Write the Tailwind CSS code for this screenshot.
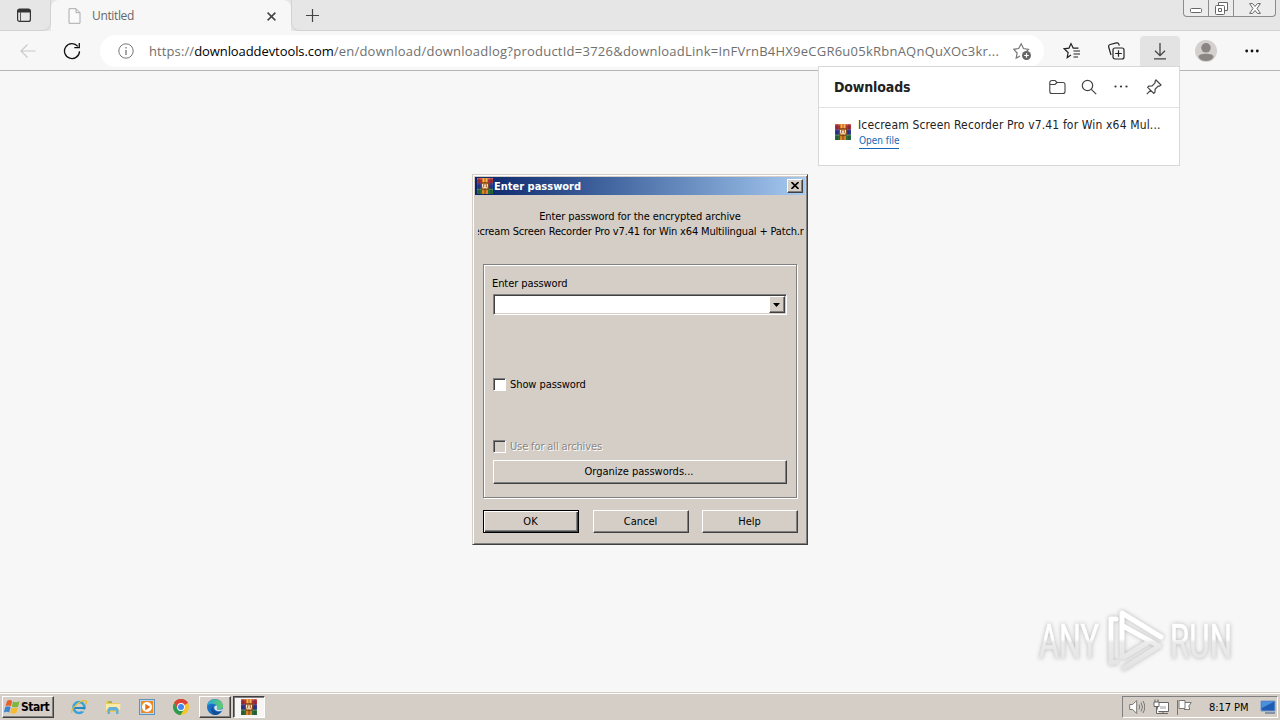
<!DOCTYPE html>
<html lang="en">
<head>
<meta charset="utf-8">
<title>Untitled</title>
<script src="https://cdn.jsdelivr.net/npm/@tailwindcss/browser@4"></script>
</head>
<body class="relative flex h-[720px] w-[1280px] flex-col overflow-hidden bg-[#f7f7f7] font-['DejaVu_Sans_Condensed','DejaVu_Sans',sans-serif] text-[11px] text-black">
<svg class="hidden">
  <symbol id="rar" viewBox="0 0 16 16">
    <rect x="0" y="0" width="16" height="5.400" fill="#a8303a"/><rect x="0" y="0" width="16" height="1.300" fill="#dc6a62"/>
    <rect x="0" y="5.400" width="16" height="5.400" fill="#2b3a94"/><rect x="0" y="5.400" width="16" height="1" fill="#7a4b9a"/>
    <rect x="0" y="10.800" width="16" height="5.200" fill="#2b6c38"/><rect x="0" y="10.800" width="16" height="1" fill="#4da25c"/>
    <path d="M2 0v16M14 0v16" stroke="#1c1c2c" stroke-opacity=".4"/>
    <rect x="5" y="0" width="6" height="16" fill="#d9852c"/><path d="M6.500 0v5M9.500 0v5" stroke="#f2b45a"/><path d="M8 11v5" stroke="#774012"/>
    <rect x="4.200" y="4.600" width="7.600" height="7" rx="1" fill="#b0682a" stroke="#5c300c" stroke-width=".6"/>
    <path d="M5.600 6v2.500q0 1.500 1.200 1.500T8 8.500V6.500v2q0 1.500 1.200 1.500t1.200-1.500V6" fill="none" stroke="#fff3dc" stroke-width="1"/>
  </symbol>
</svg>

<!-- Tab strip -->
<header class="flex h-[31px] shrink-0 bg-[#e6e6e6]">
  <div class="flex w-[51px] items-center justify-center rounded-br-lg border-r border-b border-[#d2d2d2]">
    <svg class="mr-[2px] h-4 w-4" viewBox="0 0 16 16" fill="none"><rect x="1.600" y="2" width="12.800" height="12.400" rx="2" stroke="#333" stroke-width="1.200"/><path d="M1.600 5.600V4a2 2 0 0 1 2-2h8.800a2 2 0 0 1 2 2v1.600z" fill="#333"/><path d="M4.500 5v9" stroke="#555"/></svg>
  </div>
  <div class="flex w-[240px] items-center rounded-t-lg bg-[#f7f7f7] pl-[17px] pr-[15px]">
    <svg class="h-4 w-[13px]" viewBox="0 0 13 16" fill="#fafafa" stroke="#aaa"><path d="M1 .7h7l4 4v10.600H1zM8 .7v4h4"/></svg>
    <span class="ml-[11px] flex-1 font-['Open_Sans',sans-serif] text-[12px] tracking-[-0.35px] text-[#666]">Untitled</span>
    <svg class="mt-[2px] h-[9px] w-[9px]" viewBox="0 0 9 9" stroke="#444" stroke-width="1.500"><path d="M.6.6l7.800 7.800M8.400.6L.6 8.400"/></svg>
  </div>
  <div class="flex flex-1 items-center rounded-bl-lg border-b border-l border-[#d2d2d2] pl-[13px]">
    <svg class="h-[15px] w-[15px]" viewBox="0 0 15 15" stroke="#444" stroke-width="1.200"><path d="M7.500 1v13M1 7.500h13"/></svg>
    <div class="mr-1 ml-auto flex h-[17px] w-[93px] self-start rounded-b border border-t-0 border-[#8c8c8c] bg-[#ececec]">
      <div class="flex w-[25px] items-end justify-center border-r border-[#8c8c8c] pb-[3px]"><svg class="h-[5px] w-3" viewBox="0 0 12 5"><rect x=".5" y=".5" width="11" height="4" rx="1" fill="#fff" stroke="#666"/></svg></div>
      <div class="flex w-[25px] items-center justify-center border-r border-[#8c8c8c]"><svg class="h-[13px] w-[13px]" viewBox="0 0 13 13" fill="#fff" stroke="#666"><path d="M3.500.5h9v8h-9z"/><rect x=".5" y="3.500" width="9" height="9" rx="1"/><path d="M3.500 6.500h3v3h-3z"/></svg></div>
      <div class="flex flex-1 items-center justify-center"><svg class="h-[11px] w-3" viewBox="0 0 12 11" fill="#fff" stroke="#666"><path d="M.6.6h3L6 3.500 8.400.6h3L8 5.500l3.400 4.900h-3L6 7.500l-2.400 2.900h-3L4 5.500z"/></svg></div>
    </div>
  </div>
</header>

<!-- Toolbar -->
<nav class="flex h-10 shrink-0 items-center border-b border-[#b5b5b5] bg-[#f7f7f7]">
  <svg class="ml-5 h-4 w-4" viewBox="0 0 16 16" fill="none" stroke="#c9c9c9" stroke-width="1.200"><path d="M15.500 8H1M7.500 1.500L1 8l6.500 6.500"/></svg>
  <svg class="ml-[27px] h-[18px] w-[18px]" viewBox="0 0 18 18" fill="none" stroke="#111" stroke-width="1.300"><path d="M16.500 9.200A7.500 7.500 0 1 1 14.800 4.300M16.300 1v4.600h-5"/></svg>
  <div class="ml-[19px] flex h-8 w-[944px] items-center rounded-full bg-white pl-[18px] pr-[13px]">
    <svg class="h-4 w-4 shrink-0" viewBox="0 0 16 16" fill="none" stroke="#777"><circle cx="8" cy="8" r="7.200"/><path d="M8 7v5M8 4v1.500" stroke-width="1.300"/></svg>
    <p class="mt-[2px] ml-[15px] w-[860px] font-['Open_Sans',sans-serif] text-[13px] whitespace-nowrap text-[#6f6f6f]"><span class="tracking-[0.1px]">https://</span><span class="tracking-[-0.080px] text-black">downloaddevtools.com</span><span class="tracking-[0.240px]">/en/download/downloadlog?productId=3726&amp;downloadLink=InFVrnB4HX9eCGR6u05kRbnAQnQuXOc3kr...</span></p>
    <svg class="ml-1 h-[18px] w-[18px] shrink-0" viewBox="0 0 18 18" fill="none" stroke="#777" stroke-width="1.200"><path d="M7 14l-3.800 2.200.9-5.200L.8 7.300l4.900-.8L8.200 1.800l2.300 4.700 5 .8-2 2"/><circle cx="13.500" cy="13.500" r="4.500" fill="#666" stroke="none"/><path d="M13.500 11.200v4.600M11.200 13.500h4.600" stroke="#fff"/></svg>
  </div>
  <svg class="ml-[19px] h-[18px] w-[18px]" viewBox="0 0 18 18" fill="none" stroke="#222" stroke-width="1.200"><path d="M8 13l-3.800 2.600.9-5.100L1.200 6.800l4.800-.7L8 1.600l2.200 4.500h5.300M10.500 9h6.500M10.500 12h6.500M10.500 15h4.500" /></svg>
  <svg class="ml-[26px] h-[18px] w-[18px]" viewBox="0 0 18 18" fill="none" stroke="#222" stroke-width="1.200"><path d="M4 13L1.700 5a2 2 0 0 1 1.400-2.500L9.500.9a2 2 0 0 1 2.400 1.400l.4 1.400"/><rect x="6" y="6" width="11" height="11" rx="2"/><path d="M11.500 8.200v6.600M8.200 11.500h6.600"/></svg>
  <div class="ml-[15px] flex h-[34px] w-10 items-start justify-center self-end rounded-t bg-[#e3e3e3] pt-[6px]">
    <svg class="h-[18px] w-4" viewBox="0 0 16 18" fill="none" stroke="#444" stroke-width="1.300"><path d="M8 1v12.500M3 8.700l5 5 5-5M2 16.800h12"/></svg>
  </div>
  <svg class="ml-[15px] h-[22px] w-[22px]" viewBox="0 0 22 22"><circle cx="11" cy="11" r="11" fill="#d4d0cd"/><circle cx="11" cy="7.800" r="4.800" fill="#8b8683"/><path d="M3.500 17c0-2.500 3-3.300 7.500-3.300s7.500.8 7.500 3.300C17 20 14 21 11 21s-6-1-7.500-4z" fill="#8b8683"/></svg>
  <svg class="ml-7 h-[6px] w-[14px]" viewBox="0 0 14 6" fill="#111"><circle cx="1.700" cy="3" r="1.400"/><circle cx="7" cy="3" r="1.400"/><circle cx="12.300" cy="3" r="1.400"/></svg>
</nav>

<main class="flex flex-1 items-end justify-end pr-11 pb-5">
  <!-- Watermark -->
  <svg class="h-[64px] w-[200px] overflow-visible [filter:drop-shadow(0_0_2px_#b5b5b5)]" viewBox="0 0 200 64">
    <defs><linearGradient id="wm" gradientUnits="userSpaceOnUse" x1="0" y1="0" x2="0" y2="64"><stop offset=".48" stop-color="#fff"/><stop offset=".54" stop-color="#ebebeb"/><stop offset="1" stop-color="#e2e2e2"/></linearGradient></defs>
    <g fill="url(#wm)" stroke="url(#wm)" stroke-width=".6" font-family="Roboto" font-size="49">
      <text x="3" y="50" textLength="60" lengthAdjust="spacingAndGlyphs">ANY</text>
      <text x="134" y="50" textLength="62" lengthAdjust="spacingAndGlyphs">RUN</text>
    </g>
    <g fill="none" stroke="url(#wm)" stroke-width="5" stroke-linejoin="round" stroke-linecap="round"><path d="M80 11h-5v44l5-1M86 49V5l39 24M87 18l36 20M88 60l35-22M88 49l26-16"/></g>
  </svg>
</main>

<!-- Taskbar -->
<footer class="flex h-7 shrink-0 items-center border-t border-[#d5cec7] bg-[#d5cec7] pl-[2px] shadow-[inset_0_1px_0_#fff]">
  <div class="mt-px flex h-[22px] w-[52px] items-center border border-t-white border-r-[#404040] border-b-[#404040] border-l-white pl-px shadow-[inset_-1px_-1px_0_#808080]">
    <svg class="h-4 w-4 shrink-0" viewBox="0 0 16 16"><path d="M3 2c2-1.500 3.700-1.200 5.200 0L6.900 7.300C5 6.100 3.500 6.300 1.500 7.200z" fill="#e8602c"/><path d="M9 2.400c2 1.200 4 1 6.500-.2L14.200 7.500c-2.200 1.300-4 1-6.400 0z" fill="#7cb83e"/><path d="M1.200 8.200c2-1.200 3.700-1 5.400 0L5.200 13.500c-1.700-1-3.200-1-5.400 0z" fill="#3f86d2"/><path d="M7.500 8.500c2 1.200 4.200 1 6.400 0l-1.400 5.300c-2.200 1.200-4.200 1-6.400 0z" fill="#f6bc2d"/></svg>
    <span class="ml-px text-[12px] font-bold tracking-[-0.5px]">Start</span>
  </div>
  <svg class="ml-[17px] h-4 w-4" viewBox="0 0 16 16" fill="none"><circle cx="8" cy="8.500" r="5.500" stroke="#35a3df" stroke-width="2.600"/><path d="M3 9h11" stroke="#2386c5" stroke-width="2"/><path d="M1 14C-1 11 9 0 15 2c1 1 0 3-1 4" stroke="#e5bd35" stroke-width="1.300"/><path d="M10.500 10.400H16v2h-5z" fill="#d5cec7"/></svg>
  <svg class="ml-[18px] h-4 w-4" viewBox="0 0 16 16"><path d="M1 2h5l1 2h7v9H1z" fill="#ecc95c"/><path d="M1 5h14.500l-.5 6H1z" fill="#fbeaa5"/><path d="M2.500 15v-5l2-2h7l2 2v5H11v-3.500H5V15z" fill="#62afd8"/><path d="M3 3h4" stroke="#5c9e4b"/></svg>
  <svg class="ml-[18px] h-4 w-4" viewBox="0 0 16 16"><rect x=".5" y=".5" width="15" height="15" fill="#b8d9f0" stroke="#5f91bd"/><rect x="2" y="2" width="12" height="12" fill="#f08a21"/><circle cx="8" cy="8" r="5" fill="#fff"/><path d="M6.300 4.700l5 3.300-5 3.300z" fill="#e46d10"/></svg>
  <svg class="ml-[18px] h-4 w-4" viewBox="0 0 16 16"><circle cx="8" cy="8" r="8" fill="#f5c52c"/><path d="M8 8L1.100 4A8 8 0 0 1 14.900 4z" fill="#db4437"/><path d="M8 4h6.900A8 8 0 0 0 1.100 4L4.500 10z" fill="#db4437"/><path d="M1.100 4a8 8 0 0 0 6.400 12l3.800-6L8 11.700 4.600 10z" fill="#2b9b51"/><circle cx="8" cy="8" r="3.900" fill="#fff"/><circle cx="8" cy="8" r="3" fill="#4285f4"/></svg>
  <div class="mt-px ml-[10px] flex h-[22px] w-8 items-center justify-center border border-t-white border-r-[#404040] border-b-[#404040] border-l-white shadow-[inset_-1px_-1px_0_#808080]">
    <svg class="h-4 w-4" viewBox="0 0 16 16"><defs><linearGradient id="eg" x2="1"><stop stop-color="#2aa6df"/><stop offset="1" stop-color="#63cf62"/></linearGradient></defs><circle cx="8" cy="8" r="8" fill="#1a6fc4"/><path d="M0 7C1-2 15-2 16 7c0 3-3 4-5.500 3.600C9 10 11 9 10 7 8 4 3 4 0 7z" fill="url(#eg)"/><path d="M6 7c-1 4 3 7 8.500 5.300A8 8 0 0 1 7 16C3 13 4 9 6 7z" fill="#124d98"/><path d="M10 7c1 2-1 3 .5 3.600 1.800.5 4 .2 5.500-1l-.8 2C12 13.500 7 11.500 7.200 8.500 7.500 7 9 6 10 7z" fill="#d5e3e8"/></svg>
  </div>
  <div class="mt-px ml-[2px] flex h-[22px] w-8 items-center justify-center border border-t-[#404040] border-r-white border-b-white border-l-[#404040] bg-[#f8f6f4] shadow-[inset_1px_1px_0_#808080]">
    <svg class="h-4 w-4"><use href="#rar"/></svg>
  </div>
  <div class="mt-px mr-[2px] ml-auto flex h-[22px] w-[156px] items-center border border-t-[#808080] border-r-white border-b-white border-l-[#808080] pl-[6px]">
    <svg class="h-4 w-4" viewBox="0 0 16 16" fill="#fff" stroke="#777"><path d="M.7 5.500h3l4-4v13l-4-4h-3z"/><path d="M10 5.500q1.500 2.500 0 5M12 3.500q3 4.500 0 9M14 2q3.500 6 0 12" fill="none"/></svg>
    <svg class="ml-2 h-4 w-4" viewBox="0 0 16 16" fill="#fff" stroke="#666"><path d="M4.500 3.500h11v9h-11z"/><path d="M7 7h6v3H7z" fill="#ccc" stroke="none"/><path d="M5 14.500h10M10 12.500v2"/><path d="M1 3h5v4.500H1zM2 .5V3M5 .5V3M3.500 7.500v7H6"/></svg>
    <svg class="ml-[7px] h-4 w-4" viewBox="0 0 16 16" fill="#fff" stroke="#777"><path d="M1.500 1v15M3 1.500h6v8H3zM9 3.500h6.300l-2.500 3.500 1 3.500H8"/></svg>
    <span class="mt-[2px] ml-[17px] w-[42px] whitespace-nowrap tracking-[-0.05px]">8:17 PM</span>
    <svg class="ml-[9px] h-4 w-4" viewBox="0 0 16 16"><path d="M1 2h14v10H1z" fill="#1e5cb3" stroke="#789bc9"/><path d="M1.500 2.500h13L2 9z" fill="#4a91dc"/><path d="M5 14h10" stroke="#8794a5" stroke-width="2"/></svg>
  </div>
</footer>

<!-- Downloads flyout -->
<section class="absolute top-[66px] left-[818px] flex h-[100px] w-[362px] flex-col border border-[#d8d8d8] bg-white">
  <div class="flex h-[41px] shrink-0 items-center border-b border-[#e3e3e3] pr-[17px] pl-[15px]">
    <h1 class="flex-1 text-[14px] font-bold tracking-[-0.150px] text-[#222]">Downloads</h1>
    <svg class="h-4 w-[17px]" viewBox="0 0 17 16" fill="none" stroke="#444" stroke-width="1.100"><path d="M.8 3.500a2 2 0 0 1 2-2H6l2 2h6a2 2 0 0 1 2 2v7a2 2 0 0 1-2 2H2.800a2 2 0 0 1-2-2zM.8 5.500H6l2-2"/></svg>
    <svg class="ml-[15px] h-4 w-4" viewBox="0 0 16 16" fill="none" stroke="#444" stroke-width="1.200"><circle cx="6.500" cy="6.500" r="5.200"/><path d="M10.300 10.300l4.900 4.900"/></svg>
    <svg class="ml-[17px] h-[6px] w-[14px]" viewBox="0 0 14 6" fill="#333"><circle cx="1.500" cy="2.500" r="1.100"/><circle cx="7" cy="2.500" r="1.100"/><circle cx="12.500" cy="2.500" r="1.100"/></svg>
    <svg class="ml-[18px] h-4 w-4" viewBox="0 0 16 16" fill="none" stroke="#444" stroke-width="1.200"><path d="M10 1l5 5-1.500 1.200-1.300-.1-3 3-.3 3.200-1.100 1.100L1.700 8.300l1.200-1.200 3.200-.3 3-3V2.300zM4.800 11.200L.8 15.200"/></svg>
  </div>
  <div class="flex pt-[9px] pl-4">
    <svg class="mt-[7px] h-4 w-4"><use href="#rar"/></svg>
    <div class="ml-[7px]">
      <p class="text-[12px] leading-4 tracking-[0.150px] whitespace-nowrap text-[#222]">Icecream Screen Recorder Pro v7.41 for Win x64 Mul...</p>
      <a class="ml-px block w-10 border-b border-[#1268b3] text-[10px] leading-[15px] tracking-[-0.020px] whitespace-nowrap text-[#1268b3]">Open file</a>
    </div>
  </div>
</section>

<!-- Password dialog -->
<section class="absolute top-[174px] left-[472px] flex h-[371px] w-[336px] flex-col border border-t-[#d5cec7] border-r-[#404040] border-b-[#404040] border-l-[#d5cec7] bg-[#d5cec7] p-[2px] shadow-[inset_1px_1px_0_#fff,inset_-1px_-1px_0_#808080]">
  <div class="flex h-[18px] shrink-0 items-center bg-linear-to-r from-[#0a246a] to-[#a6caf0] pr-[2px] pl-[2px]">
    <svg class="h-4 w-4"><use href="#rar"/></svg>
    <h2 class="mt-[2px] ml-px flex-1 font-bold whitespace-nowrap text-white">Enter password</h2>
    <button class="flex h-[14px] w-4 items-center justify-center border border-t-white border-r-[#404040] border-b-[#404040] border-l-white bg-[#d5cec7] shadow-[inset_-1px_-1px_0_#808080]"><svg class="mr-px mb-px h-[7px] w-2" viewBox="0 0 8 7" stroke="#000" stroke-width="1.600"><path d="M.5 0l7 7M7.500 0l-7 7"/></svg></button>
  </div>
  <div class="mr-px ml-[3px] mt-[14px] flex h-[55px] shrink-0 flex-col items-center leading-[15px] whitespace-nowrap">
    <p class="mr-[2px] tracking-[-0.100px]">Enter password for the encrypted archive</p>
    <div class="flex w-full justify-center overflow-hidden"><p class="mr-[3px] shrink-0 tracking-[-0.160px]">Icecream Screen Recorder Pro v7.41 for Win x64 Multilingual + Patch.rar</p></div>
  </div>
  <div class="mx-2 flex h-[234px] shrink-0 flex-col border border-[#808080] px-[9px] pt-[11px] shadow-[inset_1px_1px_0_#fff,1px_1px_0_#fff]">
    <label class="-ml-px leading-4 tracking-[-0.080px]">Enter password</label>
    <div class="mt-[2px] flex h-[21px] justify-end border border-t-[#808080] border-r-white border-b-white border-l-[#808080] bg-white shadow-[inset_1px_1px_0_#404040,inset_-1px_-1px_0_#d5cec7]">
      <div class="my-px mr-px flex w-4 items-center justify-center border border-t-white border-r-[#404040] border-b-[#404040] border-l-white bg-[#d5cec7] shadow-[inset_-1px_-1px_0_#808080]"><svg class="mr-px h-1 w-[7px]" viewBox="0 0 7 4"><path d="M0 0h7L3.500 4z"/></svg></div>
    </div>
    <div class="mt-[61px] flex h-4 items-center">
      <i class="h-[13px] w-[13px] border border-t-[#808080] border-r-white border-b-white border-l-[#808080] bg-white shadow-[inset_1px_1px_0_#404040]"></i><span class="mt-[3px] ml-1 tracking-[-0.080px]">Show password</span>
    </div>
    <div class="mt-[46px] flex h-4 items-center text-[#8b8682]">
      <i class="h-[13px] w-[13px] border border-t-[#808080] border-r-white border-b-white border-l-[#808080] shadow-[inset_1px_1px_0_#404040]"></i><span class="mt-[3px] ml-1 tracking-[-0.130px] [text-shadow:1px_1px_0_#fff]">Use for all archives</span>
    </div>
    <button class="mt-[6px] h-6 border border-t-white border-r-[#404040] border-b-[#404040] border-l-white pt-px pr-[2px] shadow-[inset_-1px_-1px_0_#808080]">Organize passwords...</button>
  </div>
  <div class="mr-[7px] ml-2 mt-3 flex h-[23px] justify-between">
    <button class="w-24 border border-black pt-px pr-px shadow-[inset_1px_1px_0_#fff,inset_-1px_-1px_0_#404040,inset_-2px_-2px_0_#808080]">OK</button>
    <button class="w-24 border border-t-white border-r-[#404040] border-b-[#404040] border-l-white pt-px shadow-[inset_-1px_-1px_0_#808080]">Cancel</button>
    <button class="w-24 border border-t-white border-r-[#404040] border-b-[#404040] border-l-white pt-px pr-px shadow-[inset_-1px_-1px_0_#808080]">Help</button>
  </div>
</section>
</body>
</html>
